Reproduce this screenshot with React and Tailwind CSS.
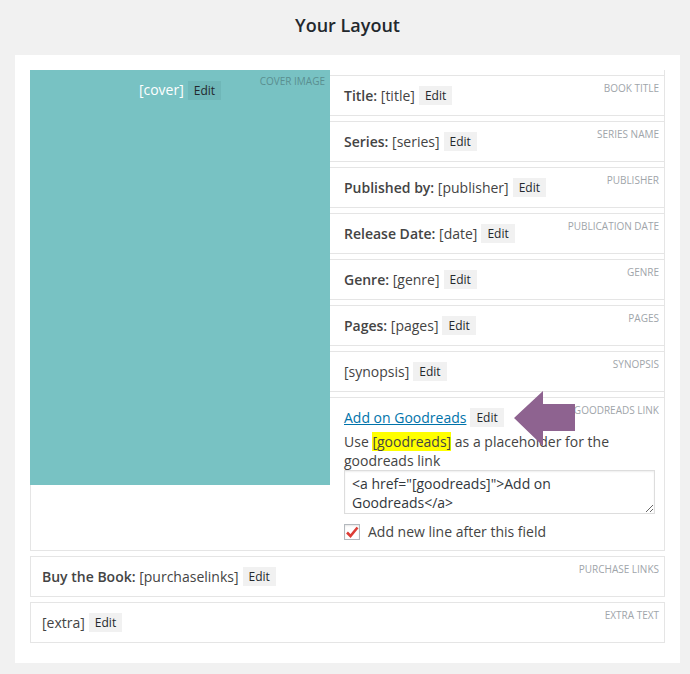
import React from 'react';

const EditBtn = ({ className = "bg-[#f1f1f1]" }) => (
    <span className={`ml-[4px] inline-block h-[19px] px-[6px] text-[12px] leading-[19px] text-[#23282d] ${className}`}>Edit</span>
);

const Tag = ({ children, className = "top-[7px] text-[#a0a5aa]" }) => (
    <span className={`absolute right-[5px] text-[10px] uppercase leading-none ${className}`}>{children}</span>
);

const Row = ({ label, value, tag, box = "border pl-[11px]", className = "" }) => (
    <div className={`relative flex h-[41px] items-center border-[#e5e5e5] bg-white ${box} ${className}`}>
        <span className="text-[14px] text-[#444]">
            {label && <span className="font-semibold">{label} </span>}
            {value}
        </span>
        <EditBtn />
        <Tag>{tag}</Tag>
    </div>
);

const fields = [
    { label: "Title:", value: "[title]", tag: "Book Title" },
    { label: "Series:", value: "[series]", tag: "Series Name" },
    { label: "Published by:", value: "[publisher]", tag: "Publisher" },
    { label: "Release Date:", value: "[date]", tag: "Publication Date" },
    { label: "Genre:", value: "[genre]", tag: "Genre" },
    { label: "Pages:", value: "[pages]", tag: "Pages" },
    { label: null, value: "[synopsis]", tag: "Synopsis" },
];

export default function App() {
    return (
        <div className="min-h-screen bg-[#f1f1f1] font-['Open_Sans','Liberation_Sans',sans-serif]">
            <h3 className="ml-[15px] w-[665px] pt-[13px] pb-[18px] text-center text-[18px] font-semibold leading-[24px] text-[#23282d]">
                Your Layout
            </h3>

            <div className="ml-[15px] w-[665px] bg-white px-[15px] pt-[15px] pb-[20px]">
                {/* cover + right column */}
                <div className="flex border-x border-b border-[#e5e5e5]">
                    <div className="relative -ml-px h-[415px] w-[300px] shrink-0 bg-[#78c2c3] pt-[10px] text-center leading-[19px]">
                        <span className="text-[14px] leading-[19px] text-white">[cover]</span>
                        <EditBtn className="bg-[#6fb7b8]" />
                        <Tag className="top-[6px] text-[#5a8f90]">Cover Image</Tag>
                    </div>

                    <div className="-mr-px flex-1 pt-[5px]">
                        {fields.map((f) => (
                            <Row key={f.tag} {...f} box="border border-l-0 pl-[14px]" className="mb-[5px]" />
                        ))}

                        <div className="relative -mb-px border border-l-0 border-[#e5e5e5] bg-white pl-[14px] pt-[10px] pb-[9px]">
                            <div className="flex h-[19px] items-center">
                                <a href="#" className="text-[14px] text-[#0073aa] underline">Add on Goodreads</a>
                                <EditBtn />
                            </div>
                            <Tag>Goodreads Link</Tag>
                            <svg className="absolute left-[184px] top-[-7px]" width="61" height="55" viewBox="0 0 61 55">
                                <polygon points="0,27 29,0 29,13 61,13 61,40 29,40 29,55" fill="#8e6390" />
                            </svg>
                            <p className="mt-[5px] pr-[8px] text-[14px] leading-[19px] text-[#444]">
                                Use <span className="bg-[#ffff00]">[goodreads]</span> as a placeholder for the goodreads link
                            </p>
                            <textarea
                                readOnly
                                defaultValue={'<a href="[goodreads]">Add on Goodreads</a>'}
                                className="block h-[44px] w-[311px] resize-y border border-[#ddd] px-[7px] py-[3px] text-[14px] leading-[19px] text-[#32373c] shadow-[inset_0_1px_2px_rgba(0,0,0,0.07)] outline-none"
                            />
                            <label className="mt-[8px] flex items-center text-[14px] leading-[19px] text-[#444]">
                                <span className="mr-[8px] flex h-[16px] w-[16px] items-center justify-center border border-[#b4b9be] bg-white shadow-[inset_0_1px_2px_rgba(0,0,0,0.1)]">
                                    <svg width="14" height="14" viewBox="0 0 14 14">
                                        <path d="M2 7.5 L5.5 11 L12.5 2.5" fill="none" stroke="#dd3d36" strokeWidth="2.6" />
                                    </svg>
                                </span>
                                Add new line after this field
                            </label>
                        </div>
                    </div>
                </div>

                <Row label="Buy the Book:" value="[purchaselinks]" tag="Purchase Links" className="mt-[5px]" />
                <Row value="[extra]" tag="Extra Text" className="mt-[5px]" />
            </div>
        </div>
    );
}
